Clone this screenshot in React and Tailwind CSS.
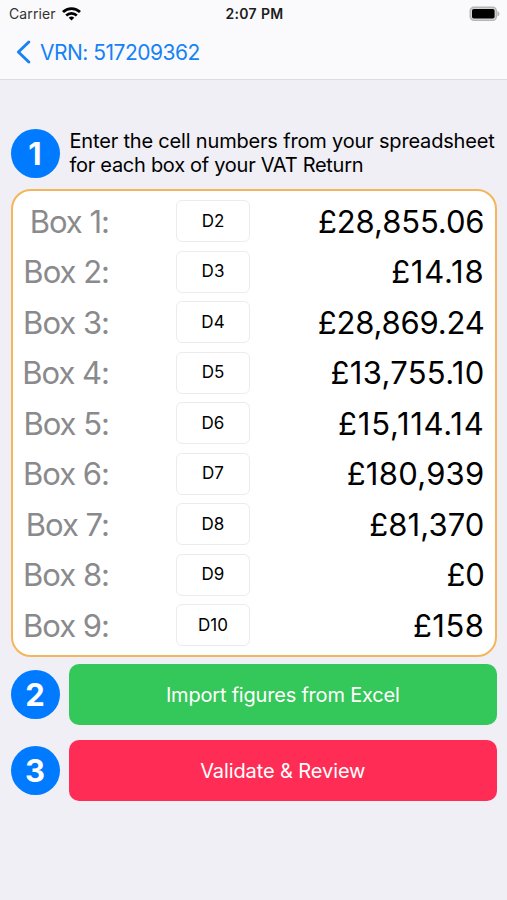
import React from "react";

const boxes = [
  { label: "Box 1:", cell: "D2", amount: "£28,855.06", tracking: "tracking-[-0.1px]" },
  { label: "Box 2:", cell: "D3", amount: "£14.18", tracking: "tracking-[0.8px]" },
  { label: "Box 3:", cell: "D4", amount: "£28,869.24", tracking: "tracking-[-0.2px]" },
  { label: "Box 4:", cell: "D5", amount: "£13,755.10", tracking: "tracking-[0.3px]" },
  { label: "Box 5:", cell: "D6", amount: "£15,114.14", tracking: "tracking-[0.75px]" },
  { label: "Box 6:", cell: "D7", amount: "£180,939", tracking: "tracking-[0.25px]" },
  { label: "Box 7:", cell: "D8", amount: "£81,370", tracking: "tracking-[0.1px]" },
  { label: "Box 8:", cell: "D9", amount: "£0", tracking: "tracking-[-0.2px]" },
  { label: "Box 9:", cell: "D10", amount: "£158", tracking: "tracking-[0.5px]" },
];

const StatusBar = () => (
  <div className="grid grid-cols-3 items-center h-[27px] pl-[9px] pr-[7px] leading-none">
    <div className="flex items-center gap-[6px] text-[#333]">
      <span className="text-[14px] tracking-[0.1px]">Carrier</span>
      {/* Wifi */}
      <svg width="19" height="14" viewBox="0 0 19 14" fill="none" stroke="#000">
        <path d="M1 5.1a12.1 12.1 0 0 1 17 0" strokeWidth="2.8" />
        <path d="M4.2 8.5a7.6 7.6 0 0 1 10.6 0" strokeWidth="2.6" />
        <path d="M9.5 13.6 6.7 10.8a4 4 0 0 1 5.6 0z" fill="#000" stroke="none" />
      </svg>
    </div>
    <span className="text-center text-[14px] font-semibold tracking-[0.35px] text-[#1c1c1e] whitespace-nowrap pt-px">
      2:07 PM
    </span>
    {/* Battery */}
    <svg className="justify-self-end" width="31" height="16" viewBox="0 0 31 16">
      <rect x="1.2" y="1.2" width="26.2" height="13.2" rx="3.8" fill="#d4d4d6" stroke="#b5b5b6" strokeWidth="1.4" />
      <rect x="3" y="3" width="22.6" height="9.6" rx="1.8" fill="#000" />
      <path d="M28.4 5c2.8 1 2.8 4.6 0 5.6z" fill="#b5b5b6" />
    </svg>
  </div>
);

const StepNumber = ({ children }) => (
  <div className="size-[49px] shrink-0 rounded-full bg-[#007aff] text-white text-[31px] leading-none font-bold flex items-center justify-center">
    {children}
  </div>
);

const BoxRow = ({ label, cell, amount, tracking }) => (
  <div className="flex items-center h-[50.5px]">
    <span className="w-[96.5px] text-right text-[31px] leading-none text-[#8a8a8d] whitespace-nowrap tracking-[-1px]">
      {label}
    </span>
    <div className="ml-[67px] w-[74px] h-[42px] rounded-[6px] border border-[#ececee] flex items-center justify-center text-[17px] leading-none">
      {cell}
    </div>
    <span className={`flex-1 text-right text-[31px] leading-none ${tracking}`}>{amount}</span>
  </div>
);

export default function App() {
  return (
    <div className="w-full h-[900px] overflow-hidden bg-[#f0eff5] text-black font-['Inter',sans-serif]">
      <header className="h-[80px] bg-[#fafafc] border-b border-[#dcdce0]">
        <StatusBar />
        <button className="flex items-center h-[50px] pl-[16px] gap-[9px] text-[#1582f5]">
          <svg width="15" height="24" viewBox="0 0 15 24" fill="none" stroke="currentColor" strokeWidth="2.9" strokeLinecap="round" strokeLinejoin="round">
            <path d="M12.8 2 2.4 12l10.4 10" />
          </svg>
          <span className="text-[21px] leading-none tracking-[-0.5px]">VRN: 517209362</span>
        </button>
      </header>

      <main className="px-[10.5px] pt-[48px]">
        <div className="flex items-center gap-[10px] h-[50px]">
          <StepNumber>1</StepNumber>
          <p className="text-[20px] leading-[24px] whitespace-nowrap pb-px">
            <span className="tracking-[-0.18px]">Enter the cell numbers from your spreadsheet</span>
            <br />
            <span className="tracking-[-0.28px]">for each box of your VAT Return</span>
          </p>
        </div>

        <div className="mt-[11px] h-[468px] rounded-[20px] border-2 border-[#f4b65c] bg-white pt-[5px] pr-[10px]">
          {boxes.map((box) => (
            <BoxRow key={box.label} {...box} />
          ))}
        </div>

        <div className="flex items-center gap-[9.5px] mt-[7px]">
          <StepNumber>2</StepNumber>
          <button className="flex-1 h-[61px] rounded-[10px] bg-[#34c759] text-white text-[20px] tracking-[-0.2px]">
            Import figures from Excel
          </button>
        </div>

        <div className="flex items-center gap-[9.5px] mt-[15px]">
          <StepNumber>3</StepNumber>
          <button className="flex-1 h-[61px] rounded-[10px] bg-[#ff2d55] text-white text-[20px] tracking-[-0.1px]">
            Validate &amp; Review
          </button>
        </div>
      </main>
    </div>
  );
}
